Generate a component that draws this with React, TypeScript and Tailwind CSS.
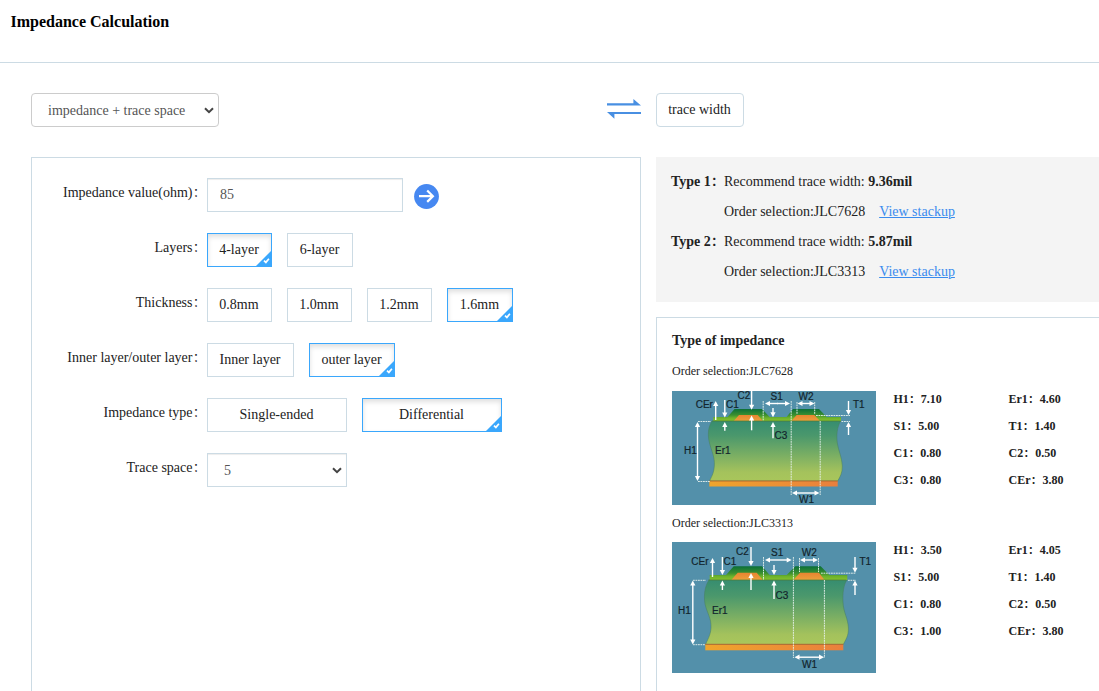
import React from 'react';

type Pt = [number, number];
type Seg = [number, number, number, number];

interface Stack {
  height: number;
  surface: number;
  humpTop: number;
  base: number;
  baseEnd: number;
  mask: string;
  substrate: string;
  traces: string[];
  plane: [number, number];
  labels: [string, number, number][];
  arrows: Seg[];
  guides: Seg[];
}

const stackA: Stack = {
  height: 114,
  surface: 30,
  humpTop: 18,
  base: 90,
  baseEnd: 95.5,
  mask: 'M41.3 30V26H55.5L62.5 18H90L97.7 26H114.5L121 18H147L154.7 26H169V30Z',
  substrate: 'M40 30C36 36 35.5 44 37.5 52C39.5 60 43 66 42.3 75C41.8 83 39 86 37.7 90H165.7C168 86 170.5 82 170.3 75C170 66 166.5 60 165.3 52C164.3 44 165 36 168.7 30Z',
  traces: ['M61.7 30L67 24H85.7L90.7 30Z', 'M119.3 30L124.7 24H142.3L148 30Z'],
  plane: [37.3, 165.7],
  labels: [
    ['CEr', 23.7, 17.3], ['C1', 54, 17], ['C2', 65.5, 8], ['S1', 98.5, 8.7], ['W2', 126.5, 8.7],
    ['T1', 181, 17], ['H1', 12, 62.5], ['Er1', 43, 62.5], ['C3', 102.5, 48.3], ['W1', 127, 112],
  ],
  arrows: [
    [43.7, 29, 43.7, 10], [52.8, 9, 52.8, 26.5], [52.8, 39.7, 52.8, 31],
    [79.6, 0, 79.6, 18.7], [79.6, 39.3, 79.6, 24.5], [101, 17, 101, 26.3], [101, 47.3, 101, 31],
    [176.5, 10, 176.5, 24], [176.5, 44, 176.5, 31], [106, 12.5, 93, 12.5], [105, 12.5, 118, 12.5],
    [134, 12.5, 125.5, 12.5], [134, 12.5, 142.5, 12.5], [25.5, 60, 25.5, 31], [25.5, 60, 25.5, 90],
    [134, 102, 120, 102], [134, 102, 147.5, 102],
  ],
  guides: [
    [91.2, 10, 91.2, 30], [119.2, 10, 119.2, 104], [148.2, 30, 148.2, 104],
    [125, 11, 125, 23], [142.7, 11, 142.7, 23], [144, 24.5, 178, 24.5],
    [169.5, 30.5, 178, 30.5], [26, 30.5, 39, 30.5], [26, 90.5, 38, 90.5],
  ],
};

const stackB: Stack = {
  height: 131,
  surface: 38,
  humpTop: 24.3,
  base: 102.3,
  baseEnd: 108.3,
  mask: 'M37.7 38V33H54L61.7 24.3H90L97.7 33H114.7L123.3 24.3H148.7L157.3 33H175.3V38Z',
  substrate: 'M37 38C33 44 31.5 52 33 62C35 71 39.5 76 39 86C38.5 94 35 98 33.7 102.5H171.3C173.5 98 176.7 94 176.4 86C176 76 171.5 71 171 60C170.6 51 171.5 43 175 38Z',
  traces: ['M59.3 38L65.7 30.7H84.7L90.7 38Z', 'M121.3 38L128 30.7H147L152.5 38Z'],
  plane: [33.3, 171.3],
  labels: [
    ['CEr', 19.3, 23], ['C1', 51.5, 23], ['C2', 64, 13], ['S1', 99, 14], ['W2', 129.7, 13.7],
    ['T1', 187.5, 23], ['H1', 6, 72], ['Er1', 40, 72], ['C3', 103.5, 57], ['W1', 130, 126.3],
  ],
  arrows: [
    [40.5, 35, 40.5, 16], [50.4, 15, 50.4, 33], [50.4, 48, 50.4, 38.5],
    [79, 5, 79, 24], [79, 48, 79, 31], [102, 23, 102, 33], [102, 57, 102, 38.5],
    [183, 15, 183, 30.7], [183, 53, 183, 38.5], [106, 18, 93, 18], [106, 18, 119.7, 18],
    [137, 18, 128, 18], [137, 18, 146, 18], [20.8, 70, 20.8, 38.5], [20.8, 70, 20.8, 102.5],
    [137, 115.2, 122.5, 115.2], [137, 115.2, 152, 115.2],
  ],
  guides: [
    [91.5, 15, 91.5, 38], [121.4, 15, 121.4, 116], [152.4, 38, 152.4, 116],
    [127.5, 16, 127.5, 30], [146.5, 16, 146.5, 30], [149, 31.2, 184, 31.2],
    [176, 38.3, 184, 38.3], [21, 38.3, 34, 38.3], [21, 102.7, 33, 102.7],
  ],
};

function arrowHead([x1, y1, x2, y2]: Seg): string {
  const len = Math.hypot(x2 - x1, y2 - y1);
  const ux = (x2 - x1) / len;
  const uy = (y2 - y1) / len;
  const at = (back: number, side: number): Pt => [x2 - ux * back - uy * side, y2 - uy * back + ux * side];
  return [at(0, 0), at(5, 2.6), at(5, -2.6)].map((p) => p.join(',')).join(' ');
}

function StackDiagram({ s, id }: { s: Stack; id: string }) {
  return (
    <svg width="204" height={s.height} viewBox={`0 0 204 ${s.height}`} className="block shrink-0">
      <defs>
        <linearGradient id={`${id}-core`} x1="0" y1="0" x2="0" y2="1">
          <stop offset="0" stopColor="#368d70" />
          <stop offset="0.25" stopColor="#4b986c" />
          <stop offset="0.85" stopColor="#a4c25c" />
          <stop offset="1" stopColor="#a9c65b" />
        </linearGradient>
        <linearGradient id={`${id}-mask`} gradientUnits="userSpaceOnUse" x1="0" y1={s.humpTop} x2="0" y2={s.surface}>
          <stop offset="0" stopColor="#0b6f38" />
          <stop offset="0.5" stopColor="#3b8f30" />
          <stop offset="0.75" stopColor="#6fb32c" />
          <stop offset="1" stopColor="#86c02c" />
        </linearGradient>
        <linearGradient id={`${id}-cu`} x1="0" y1="0" x2="0" y2="1">
          <stop offset="0" stopColor="#e88431" />
          <stop offset="1" stopColor="#eba03a" />
        </linearGradient>
        <linearGradient id={`${id}-plane`} x1="0" y1="0" x2="1" y2="0">
          <stop offset="0" stopColor="#f0a52c" />
          <stop offset="1" stopColor="#e97f3d" />
        </linearGradient>
      </defs>
      <rect width="204" height={s.height} fill="#5390aa" />
      <path d={s.substrate} fill={`url(#${id}-core)`} stroke="#467f5e" strokeWidth="0.5" />
      <path d={s.mask} fill={`url(#${id}-mask)`} />
      {s.traces.map((d) => (
        <path key={d} d={d} fill={`url(#${id}-cu)`} />
      ))}
      <path d={`M${s.plane[0] + 3} ${s.surface}H${s.plane[1] + 3}`} stroke="#4c7f3a" strokeWidth="0.7" />
      <rect x={s.plane[0]} y={s.base} width={s.plane[1] - s.plane[0]} height={s.baseEnd - s.base} fill={`url(#${id}-plane)`} />
      <path d={`M${s.plane[0]} ${s.base}H${s.plane[1]}`} stroke="#ad6a32" strokeWidth="1" />
      {s.guides.map(([a, b, c, d]) => (
        <line key={`${a}-${b}-${c}`} x1={a} y1={b} x2={c} y2={d} stroke="#e9f3ee" strokeOpacity="0.9" strokeWidth="1" strokeDasharray="1.8 0.7" />
      ))}
      {s.arrows.map((a, i) => (
        <g key={i}>
          <line x1={a[0]} y1={a[1]} x2={a[2] - Math.sign(a[2] - a[0]) * 3} y2={a[3] - Math.sign(a[3] - a[1]) * 3} stroke="#fff" strokeWidth="1.4" />
          <polygon points={arrowHead(a)} fill="#fff" />
        </g>
      ))}
      {s.labels.map(([t, x, y]) => (
        <text key={t} x={x} y={y} fontFamily="'Liberation Sans', sans-serif" fontSize="10" fill="#12242c" stroke="#12242c" strokeWidth="0.2">
          {t}
        </text>
      ))}
    </svg>
  );
}

function Chevron() {
  return (
    <svg width="10" height="7" viewBox="0 0 10 7" className="pointer-events-none absolute right-[5px] top-[14px]">
      <path d="M1 1.2L5 5.2L9 1.2" fill="none" stroke="#444" strokeWidth="2" />
    </svg>
  );
}

function Colon() {
  return (
    <span className="inline-block w-[1em] pl-[0.5px] text-left align-baseline leading-none">
      <span className="text-[0.86em]">：</span>
    </span>
  );
}

function Option({ children, active, width }: { children: string; active?: boolean; width: string }) {
  return (
    <button
      className={`relative h-[34px] shrink-0 border pb-px pr-px text-center leading-[31px] ${width} ${
        active ? 'border-[#3aa7fc] shadow-[inset_0_3px_5px_rgba(0,0,0,0.125)]' : 'border-[#ccdbe4]'
      }`}
    >
      {children}
      {active && (
        <svg width="16" height="16" viewBox="0 0 16 16" className="absolute -right-px bottom-0">
          <path d="M16 0V16H0Z" fill="#3aa7fc" />
          <path d="M8 10.6L9.9 12.4L12.9 8.8" fill="none" stroke="#fff" strokeWidth="1.7" />
        </svg>
      )}
    </button>
  );
}

function Row({ label, children }: { label: string; children: React.ReactNode }) {
  return (
    <div className="flex h-[34px]">
      <div className="w-[175px] shrink-0 whitespace-nowrap pr-[0.5px] text-right leading-[30px]">{label}<Colon /></div>
      <div className="flex gap-[15px]">{children}</div>
    </div>
  );
}

function Recommendation({ n, width, order }: { n: number; width: string; order: string }) {
  return (
    <div className="flex leading-[30px]">
      <div className="w-[53px] shrink-0 whitespace-nowrap font-bold">Type {n}<Colon /></div>
      <div>
        <div className="h-[30px]">
          Recommend trace width: <b>{width}</b>
        </div>
        <div className="flex h-[30px] gap-[14px]">
          <span>Order selection:{order}</span>
          <a href="#" className="text-[#3a8bee] underline">View stackup</a>
        </div>
      </div>
    </div>
  );
}

function Values({ items }: { items: [string, string][] }) {
  return (
    <div className="ml-[17.5px] mt-px grid w-[230px] shrink-0 grid-cols-2 content-start gap-y-[12px] text-[12px] font-bold leading-[15px]">
      {items.map(([k, v]) => (
        <div key={k} className="h-[15px] whitespace-nowrap">{k}<Colon />{v}</div>
      ))}
    </div>
  );
}

export default function App() {
  return (
    <div className="h-[691px] w-[1099px] overflow-hidden bg-white font-['Liberation_Serif','Noto_Sans_CJK_SC',serif] text-[14px] text-[#222]">
      <header className="h-[63px] border-b border-[#ccdbe4] pl-[10.5px] pt-[11px]">
        <h1 className="text-[16px] font-bold leading-[22px] text-black">Impedance Calculation</h1>
      </header>

      <div className="flex h-[64px] pl-[31px] pt-[30px]">
        <div className="relative h-[34px] w-[188px]">
          <select className="h-full w-full appearance-none rounded-[4px] border border-[#ccc] bg-white pl-4 text-[#555]">
            <option>impedance + trace space</option>
          </select>
          <Chevron />
        </div>
        <svg width="34" height="20" viewBox="0 0 34 20" className="ml-[388px] mt-[6px]">
          <path d="M0 4.3H26.4V0L34 6.5H0Z" fill="#488fe2" />
          <path d="M34 15H7.4V19.8L0 13H34Z" fill="#488fe2" />
        </svg>
        <div className="ml-[15px] h-[34px] w-[88px] rounded-[4px] border border-[#ccdbe4] pr-px text-center leading-[31px]">trace width</div>
      </div>

      <div className="flex h-[600px] pl-[31px] pt-[30px]">
        <section className="flex w-[610px] shrink-0 flex-col gap-[21px] border border-[#ccdbe4] pt-[20px]">
          <Row label="Impedance value(ohm)">
            <input defaultValue="85" className="h-[34px] w-[196px] border border-[#ccdbe4] px-3 pb-px text-[#555] shadow-[inset_0_1px_1px_rgba(0,0,0,0.075)]" />
            <svg width="25" height="25" viewBox="0 0 25 25" className="-ml-[4px] mt-[6px]">
              <circle cx="12.5" cy="12.5" r="12.4" fill="#4688f1" />
              <path d="M5 12.2H19M13.2 6.5L18.9 12.2L13.2 17.9" fill="none" stroke="#fff" strokeWidth="2.2" />
            </svg>
          </Row>
          <Row label="Layers">
            <Option width="w-[65px]" active>4-layer</Option>
            <Option width="w-[66px]">6-layer</Option>
          </Row>
          <Row label="Thickness">
            <Option width="w-[65px]">0.8mm</Option>
            <Option width="w-[65px]">1.0mm</Option>
            <Option width="w-[65px]">1.2mm</Option>
            <Option width="w-[66px]" active>1.6mm</Option>
          </Row>
          <Row label="Inner layer/outer layer">
            <Option width="w-[87px]">Inner layer</Option>
            <Option width="w-[86px]" active>outer layer</Option>
          </Row>
          <Row label="Impedance type">
            <Option width="w-[140px]">Single-ended</Option>
            <Option width="w-[140px]" active>Differential</Option>
          </Row>
          <Row label="Trace space">
            <div className="relative h-[34px] w-[140px]">
              <select className="h-full w-full appearance-none border border-[#ccdbe4] bg-white pl-4 text-[#555] shadow-[inset_0_1px_1px_rgba(0,0,0,0.075)]">
                <option>5</option>
              </select>
              <Chevron />
            </div>
          </Row>
        </section>

        <div className="ml-[15px] flex w-[443px] shrink-0 flex-col gap-[15px]">
          <section className="h-[145px] shrink-0 bg-[#f4f4f4] pl-[15px] pt-[10px]">
            <Recommendation n={1} width="9.36mil" order="JLC7628" />
            <Recommendation n={2} width="5.87mil" order="JLC3313" />
          </section>
          <section className="flex-1 border-l border-t border-[#ccdbe4] pl-[15px] pt-[13px]">
            <h2 className="text-[14px] font-bold leading-[20px]">Type of impedance</h2>
            <p className="mt-[12px] h-[28px] text-[12px] leading-[16px]">Order selection:JLC7628</p>
            <div className="flex">
              <StackDiagram s={stackA} id="a" />
              <Values items={[['H1', '7.10'], ['Er1', '4.60'], ['S1', '5.00'], ['T1', '1.40'], ['C1', '0.80'], ['C2', '0.50'], ['C3', '0.80'], ['CEr', '3.80']]} />
            </div>
            <p className="mt-[10px] h-[27px] text-[12px] leading-[16px]">Order selection:JLC3313</p>
            <div className="flex">
              <StackDiagram s={stackB} id="b" />
              <Values items={[['H1', '3.50'], ['Er1', '4.05'], ['S1', '5.00'], ['T1', '1.40'], ['C1', '0.80'], ['C2', '0.50'], ['C3', '1.00'], ['CEr', '3.80']]} />
            </div>
          </section>
        </div>
      </div>
    </div>
  );
}
